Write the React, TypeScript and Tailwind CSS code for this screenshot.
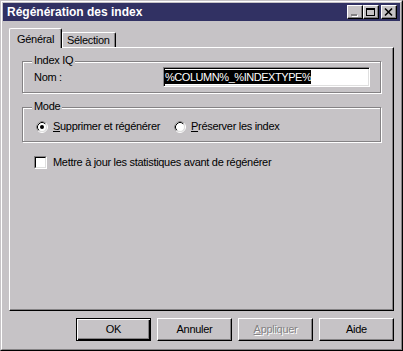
import React from "react";

const FACE = "bg-[#c6c3c6]";

function Radio({ checked }: { checked?: boolean }) {
  return (
    <svg width="12" height="12" viewBox="0 0 12 12" className="shrink-0">
      <circle cx="6" cy="6" r="5.5" fill="none" stroke="#ffffff" />
      <path d="M2.11 9.89 A5.5 5.5 0 0 1 9.89 2.11" fill="none" stroke="#848284" />
      <circle cx="6" cy="6" r="4.5" fill="#ffffff" stroke="#dfdfdf" />
      <path d="M2.82 9.18 A4.5 4.5 0 0 1 9.18 2.82" fill="none" stroke="#000000" />
      {checked && <circle cx="6" cy="6" r="2" fill="#000000" />}
    </svg>
  );
}

function Checkbox() {
  return (
    <span className="block w-[13px] h-[13px] shrink-0 border border-t-[#848284] border-l-[#848284] border-r-white border-b-white">
      <span className="block w-full h-full bg-white border border-t-black border-l-black border-r-[#dfdfdf] border-b-[#dfdfdf]" />
    </span>
  );
}

function Group({ label, children }: { label: string; children: React.ReactNode }) {
  return (
    <div className="relative w-[359px] border border-[#848284] shadow-[inset_1px_1px_0_#fff,1px_1px_0_#fff]">
      <span className={`absolute left-[9px] -top-[8px] px-[2px] leading-[13px] ${FACE}`}>{label}</span>
      {children}
    </div>
  );
}

function Btn({ children, def, disabled }: { children: React.ReactNode; def?: boolean; disabled?: boolean }) {
  const frame = def
    ? "border border-black shadow-[inset_1px_1px_0_#fff,inset_-1px_-1px_0_#000,inset_-2px_-2px_0_#848284]"
    : "border border-t-white border-l-white border-r-black border-b-black shadow-[inset_-1px_-1px_0_#848284]";
  return (
    <div
      className={`w-[75px] h-[23px] flex items-center justify-center ${frame} ${
        disabled ? "text-[#848284] [text-shadow:1px_1px_0_#fff]" : "text-black"
      }`}
    >
      {children}
    </div>
  );
}

function CapBtn({ children }: { children: React.ReactNode }) {
  return (
    <div className={`w-[16px] h-[14px] ${FACE} border border-t-white border-l-white border-r-black border-b-black shadow-[inset_-1px_-1px_0_#848284] flex items-center justify-center`}>
      {children}
    </div>
  );
}

export default function App() {
  return (
    <div className="w-[403px] h-[351px] bg-[#c6c3c6] border border-t-[#c6c3c6] border-l-[#c6c3c6] border-r-black border-b-black font-['Liberation_Sans',Arial,sans-serif] text-[11px] tracking-[-0.3px] text-black">
      <div className="h-full border border-t-white border-l-white border-r-[#848284] border-b-[#848284] p-px flex flex-col">
        {/* Title bar */}
        <div className="h-[18px] bg-[#313163] flex items-center pl-[4px] pr-[3px] shrink-0">
          <span className="text-white font-bold text-[12px] leading-[18px] tracking-normal">Régénération des index</span>
          <div className="ml-auto flex items-center">
            <CapBtn>
              <svg width="10" height="10" viewBox="0 0 10 10">
                <rect x="2" y="8" width="6" height="2" fill="#ffffff" />
                <rect x="1" y="7" width="6" height="2" fill="#848284" />
              </svg>
            </CapBtn>
            <CapBtn>
              <svg width="10" height="10" viewBox="0 0 10 10">
                <rect x="0.5" y="1.5" width="8" height="7" fill="none" stroke="#000" />
                <rect x="0" y="1" width="9" height="2" fill="#000" />
              </svg>
            </CapBtn>
            <div className="ml-[2px]">
              <CapBtn>
                <svg width="10" height="10" viewBox="0 0 10 10">
                  <path d="M1 1.5 L8 8.5 M8 1.5 L1 8.5" stroke="#000" strokeWidth="1.6" />
                </svg>
              </CapBtn>
            </div>
          </div>
        </div>

        {/* Tabs */}
        <div className="flex items-end ml-[6px] mt-[7px] shrink-0">
          <div className={`relative z-10 -mb-px w-[53px] h-[20px] ${FACE} border-t border-l border-r border-t-white border-l-white border-r-black shadow-[inset_-1px_0_0_#848284] rounded-t-[2px] pl-[7px] pt-[4px] leading-[13px]`}>
            Général
          </div>
          <div className={`w-[54px] h-[15px] ${FACE} border-t border-r border-t-white border-r-black shadow-[inset_-1px_0_0_#848284,inset_1px_0_0_#fff] rounded-tr-[2px] pl-[5px] pt-[1px] leading-[13px]`}>
            Sélection
          </div>
        </div>

        {/* Panel */}
        <div className="mx-[6px] h-[264px] shrink-0 border border-t-white border-l-white border-r-black border-b-black shadow-[inset_-1px_-1px_0_#848284] pl-[12px] pt-[13px] flex flex-col">
          <Group label="Index IQ">
            <div className="flex items-center pl-[11px] pt-[5px] pb-[5px]">
              <span className="w-[129px]">Nom :</span>
              <div className="w-[207px] h-[20px] bg-white border border-t-[#848284] border-l-[#848284] border-r-white border-b-white shadow-[inset_1px_1px_0_#000,inset_-1px_-1px_0_#dfdfdf] flex items-center pl-[1px]">
                <span className="bg-black text-white leading-[14px] tracking-[-0.45px]">%COLUMN%_%INDEXTYPE%</span>
              </div>
            </div>
          </Group>

          <div className="mt-[14px]">
            <Group label="Mode">
              <div className="flex items-center pl-[13px] pt-[12px] pb-[8px]">
                <div className="w-[138px] flex items-center gap-[5px] h-[13px]">
                  <Radio checked />
                  <span>
                    <span className="underline underline-offset-[1px]">S</span>upprimer et régénérer
                  </span>
                </div>
                <div className="flex items-center gap-[5px] h-[13px]">
                  <Radio />
                  <span>
                    <span className="underline underline-offset-[1px]">P</span>réserver les index
                  </span>
                </div>
              </div>
            </Group>
          </div>

          <div className="mt-[12px] ml-[12px] flex items-center gap-[6px]">
            <Checkbox />
            <span>Mettre à jour les statistiques avant de régénérer</span>
          </div>
        </div>

        {/* Buttons */}
        <div className="flex justify-end gap-[6px] mt-[7px] mr-[6px] shrink-0">
          <Btn def>OK</Btn>
          <Btn>Annuler</Btn>
          <Btn disabled>
            <span>
              <span className="underline underline-offset-[1px]">A</span>ppliquer
            </span>
          </Btn>
          <Btn>Aide</Btn>
        </div>
      </div>
    </div>
  );
}
